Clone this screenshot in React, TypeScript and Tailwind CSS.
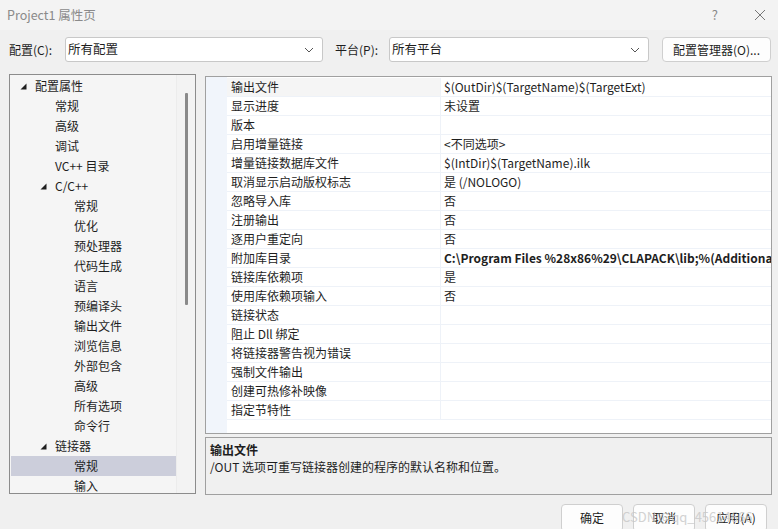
import React from "react";

const FONT = { fontFamily: '"Noto Sans CJK SC", "Noto Sans", sans-serif' };

type TreeItem = { label: string; level: number; expand?: boolean; selected?: boolean };

const tree: TreeItem[] = [
  { label: "配置属性", level: 0, expand: true },
  { label: "常规", level: 1 },
  { label: "高级", level: 1 },
  { label: "调试", level: 1 },
  { label: "VC++ 目录", level: 1 },
  { label: "C/C++", level: 1, expand: true },
  { label: "常规", level: 2 },
  { label: "优化", level: 2 },
  { label: "预处理器", level: 2 },
  { label: "代码生成", level: 2 },
  { label: "语言", level: 2 },
  { label: "预编译头", level: 2 },
  { label: "输出文件", level: 2 },
  { label: "浏览信息", level: 2 },
  { label: "外部包含", level: 2 },
  { label: "高级", level: 2 },
  { label: "所有选项", level: 2 },
  { label: "命令行", level: 2 },
  { label: "链接器", level: 1, expand: true },
  { label: "常规", level: 2, selected: true },
  { label: "输入", level: 2 },
];

const props: { name: string; value: string; bold?: boolean }[] = [
  { name: "输出文件", value: "$(OutDir)$(TargetName)$(TargetExt)" },
  { name: "显示进度", value: "未设置" },
  { name: "版本", value: "" },
  { name: "启用增量链接", value: "<不同选项>" },
  { name: "增量链接数据库文件", value: "$(IntDir)$(TargetName).ilk" },
  { name: "取消显示启动版权标志", value: "是 (/NOLOGO)" },
  { name: "忽略导入库", value: "否" },
  { name: "注册输出", value: "否" },
  { name: "逐用户重定向", value: "否" },
  { name: "附加库目录", value: "C:\\Program Files %28x86%29\\CLAPACK\\lib;%(AdditionalLibraryDirectories)", bold: true },
  { name: "链接库依赖项", value: "是" },
  { name: "使用库依赖项输入", value: "否" },
  { name: "链接状态", value: "" },
  { name: "阻止 Dll 绑定", value: "" },
  { name: "将链接器警告视为错误", value: "" },
  { name: "强制文件输出", value: "" },
  { name: "创建可热修补映像", value: "" },
  { name: "指定节特性", value: "" },
];

const Tri = () => (
  <svg width="7" height="7" viewBox="0 0 7 7" className="shrink-0">
    <polygon points="6.5,0.5 6.5,6.5 0.5,6.5" fill="#1e1e1e" />
  </svg>
);

const Chevron = () => (
  <svg width="10" height="6" viewBox="0 0 10 6" className="shrink-0">
    <polyline points="1,1 5,5 9,1" fill="none" stroke="#555" strokeWidth="1" />
  </svg>
);

export default function App() {
  return (
    <div
      className="relative w-[778px] h-[529px] overflow-hidden bg-[#f0f0f0] text-[12px] text-[#1e1e1e]"
      style={FONT}
    >
      {/* title bar */}
      <div className="h-[30px] bg-[#f3f3f3] flex items-center pl-[7px] pr-[12px]">
        <span className="text-[#8a8a8a] text-[12.5px]">Project1 属性页</span>
        <span className="ml-auto text-[#888] text-[13px] mr-[36px]">?</span>
        <svg width="12" height="12" viewBox="0 0 12 12">
          <path d="M1 1 L11 11 M11 1 L1 11" stroke="#777" strokeWidth="1" />
        </svg>
      </div>

      {/* toolbar */}
      <div className="mt-[7px] h-[25px] flex items-center pl-[9px]">
        <span className="w-[56px]">配置(C):</span>
        <div className="w-[258px] h-[25px] bg-white border border-[#c8c8c8] rounded-[3px] flex items-center pl-[2px] pr-[8px]">
          <span className="text-[12.5px]">所有配置</span>
          <span className="ml-auto"><Chevron /></span>
        </div>
        <span className="ml-[12px] w-[54px]">平台(P):</span>
        <div className="w-[260px] h-[25px] bg-white border border-[#c8c8c8] rounded-[3px] flex items-center pl-[2px] pr-[8px]">
          <span className="text-[12.5px]">所有平台</span>
          <span className="ml-auto"><Chevron /></span>
        </div>
        <div className="ml-[13px] w-[109px] h-[25px] bg-[#fdfdfd] border border-[#cfcfcf] rounded-[4px] flex items-center justify-center">
          配置管理器(O)...
        </div>
      </div>

      {/* main area */}
      <div className="mt-[12px] flex pl-[9px]">
        {/* tree */}
        <div className="w-[187px] h-[420px] border border-[#8c8c8c] bg-[#f5f5f5] flex overflow-hidden">
          <div className="w-[166px] shrink-0 pt-[1px] pl-[1px]">
            {tree.map((t, i) => {
              const pad = t.level === 0 ? 9 : t.level === 1 ? (t.expand ? 29 : 44) : 63;
              return (
                <div
                  key={i}
                  className={`h-[20px] flex items-center ${t.selected ? "bg-[#cccedb]" : ""}`}
                  style={{ paddingLeft: pad }}
                >
                  {t.expand && (
                    <span className="mr-[8px] flex items-center">
                      <Tri />
                    </span>
                  )}
                  <span>{t.label}</span>
                </div>
              );
            })}
          </div>
          <div className="flex-1 bg-[#f3f3f3] border-l border-[#ececec] flex justify-center pt-[18px]">
            <div className="w-[3px] h-[212px] bg-[#8a8a8a] rounded-[1px]" />
          </div>
        </div>

        {/* right column */}
        <div className="ml-[9px] mt-[2px] w-[567px] flex flex-col">
          <div className="h-[358px] border border-[#a0a0a0] bg-white flex overflow-hidden">
            <div className="w-[21px] shrink-0 bg-[#f1f5fb]" />
            <div className="flex-1 min-w-0 pt-[1px]">
              {props.map((p, i) => (
                <div key={i} className="h-[19px] flex border-b border-[#eef2f8]">
                  <div
                    className={`w-[214px] shrink-0 pl-[4px] flex items-center border-r border-[#eef2f8] ${
                      i === 0 ? "bg-[#f5f5f5]" : ""
                    }`}
                  >
                    {p.name}
                  </div>
                  <div
                    className={`flex-1 min-w-0 pl-[3px] flex items-center whitespace-nowrap overflow-hidden ${
                      p.bold ? "font-bold" : ""
                    }`}
                  >
                    {p.value}
                  </div>
                </div>
              ))}
            </div>
          </div>
          <div className="mt-[3px] h-[58px] border border-[#a0a0a0] bg-[#f0f0f0] pl-[4px] pt-[3px]">
            <div className="font-bold leading-[17px]">输出文件</div>
            <div className="leading-[17px]">/OUT 选项可重写链接器创建的程序的默认名称和位置。</div>
          </div>
        </div>
      </div>

      {/* footer buttons */}
      <div className="mt-[9px] flex justify-end pr-[11px] gap-[10px]">
        <div className="w-[62px] h-[28px] bg-[#fdfdfd] border border-[#cfcfcf] rounded-[4px] flex items-center justify-center">
          确定
        </div>
        <div className="w-[62px] h-[28px] bg-[#fdfdfd] border border-[#cfcfcf] rounded-[4px] flex items-center justify-center">
          取消
        </div>
        <div className="w-[62px] h-[28px] bg-[#fdfdfd] border border-[#cfcfcf] rounded-[4px] flex items-center justify-center">
          应用(A)
        </div>
      </div>

      {/* watermark */}
      <div className="absolute left-[622px] top-[507px] text-[13px] text-[#c8c8c8] opacity-80 pointer-events-none whitespace-nowrap">
        CSDN @qq_45614666
      </div>
    </div>
  );
}
